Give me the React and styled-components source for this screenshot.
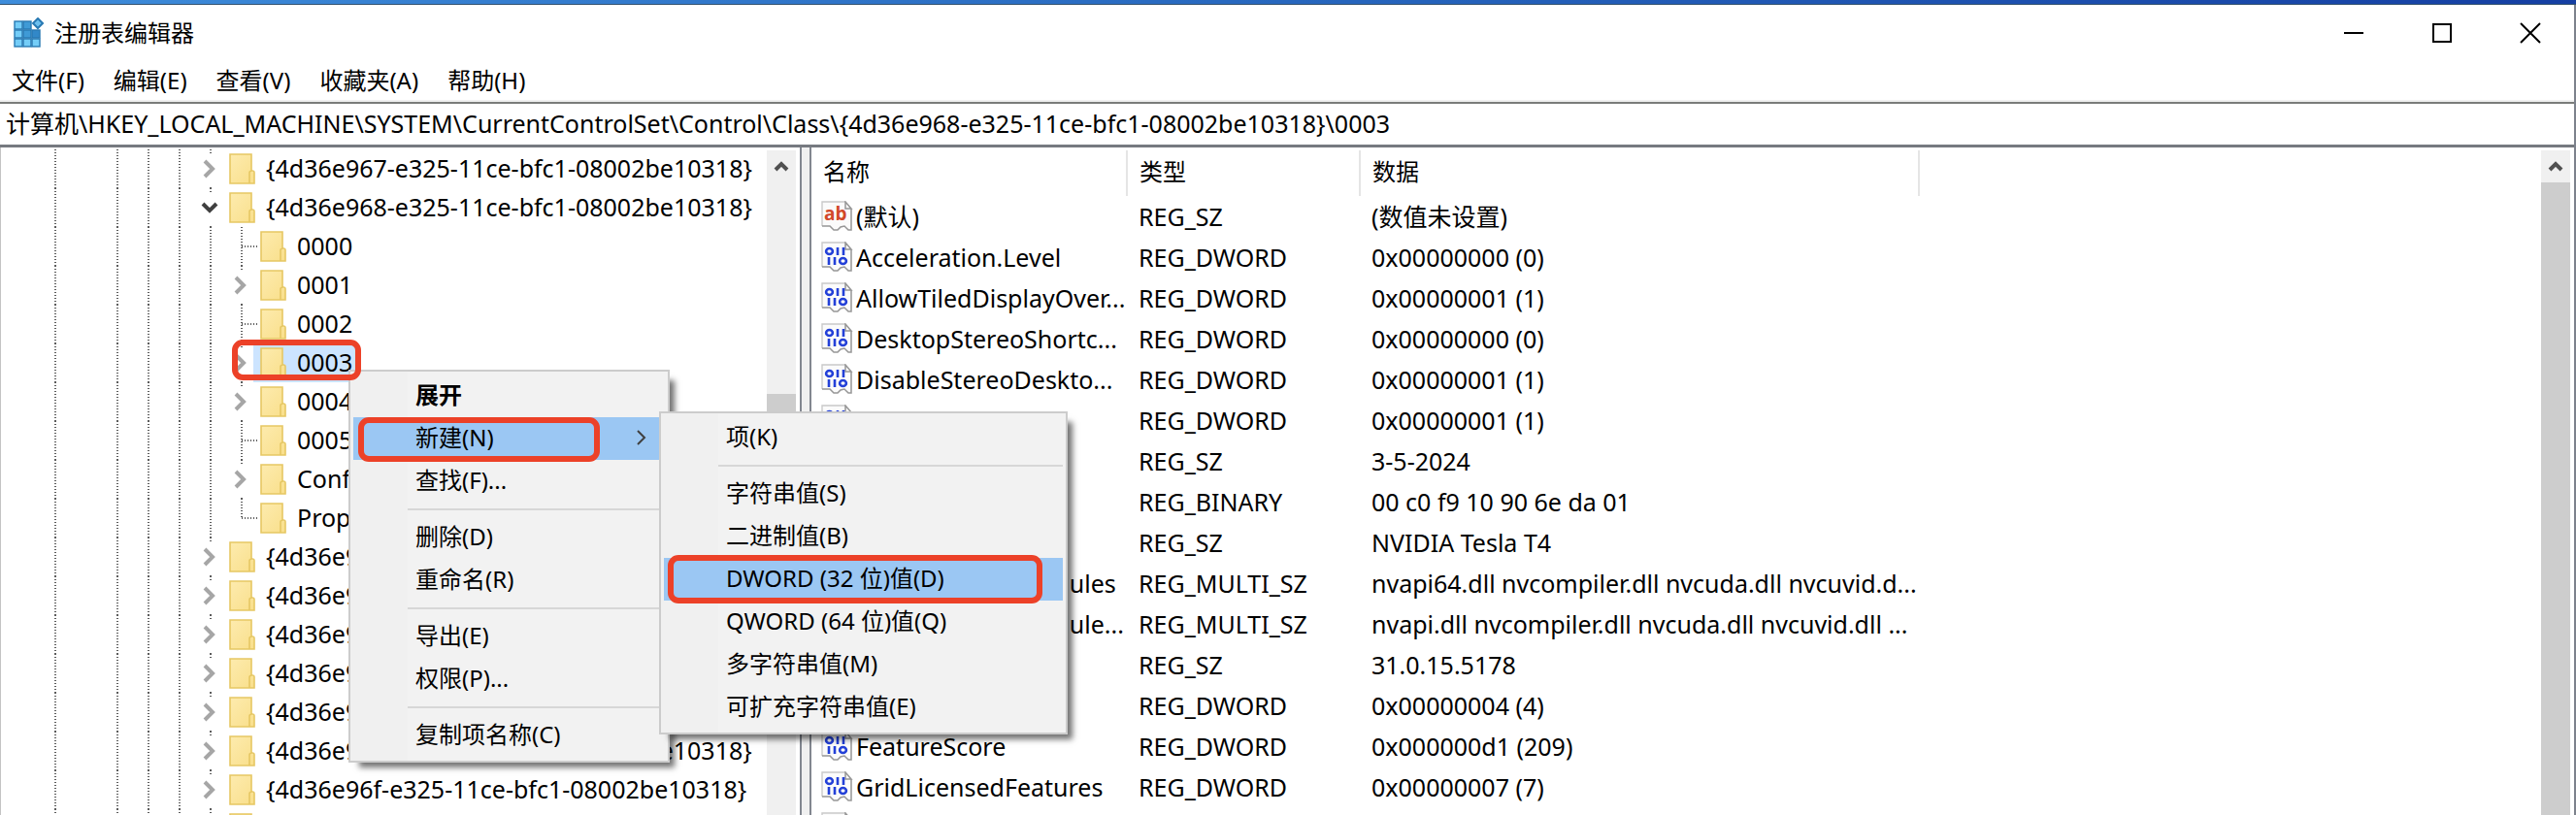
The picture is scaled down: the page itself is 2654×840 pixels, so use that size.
import styled, { createGlobalStyle, css } from "styled-components";

const GlobalStyle = createGlobalStyle`
	* {
		box-sizing: border-box;
	}

	body {
		margin: 0;
		background: #fff;
		color: #000;
		font-family: "Noto Sans", "Noto Sans CJK SC", sans-serif;
		font-size: 24px;
		line-height: 32px;
	}

	button,
	input {
		font: inherit;
		color: inherit;
		border: 0;
		padding: 0;
		background: none;
	}
`;

const dots = "#5c5c5c 0 1px, transparent 1px 3px";

const Screen = styled.div`
	height: 100vh;
	display: flex;
	flex-direction: column;
	overflow: hidden;
`;

const Desktop = styled.div`
	flex: none;
	height: 5px;
	background: linear-gradient(90deg, #3e8ddb, #2767be 50%, #153fa3);
	border-bottom: 1px solid #33526f;
`;

const Window = styled.div`
	flex: 1;
	min-height: 0;
	display: flex;
	flex-direction: column;
	background: #fff;
	border-right: 2px solid #7d828c;
`;

const TitleBar = styled.header`
	flex: none;
	height: 57px;
	display: flex;
	align-items: center;
	padding-left: 14px;
`;

const Title = styled.h1`
	flex: 1;
	margin: 0 0 0 10px;
	font-size: 24px;
	font-weight: 400;
`;

const CaptionButton = styled.button`
	width: 91px;
	height: 57px;
	display: flex;
	align-items: center;
	justify-content: center;
`;

const MenuBar = styled.nav`
	flex: none;
	height: 43px;
	display: flex;
	align-items: center;
	gap: 30px;
	padding-left: 12px;
	border-bottom: 2px solid #f0f0f0;
`;

const AddressBar = styled.label`
	flex: none;
	display: flex;
	height: 47px;
	border-top: 2px solid #7a7c7a;
	border-bottom: 3px solid #767a80;
`;

const AddressInput = styled.input`
	flex: 1;
	padding: 0 0 2px 6px;
	font-size: 25px;
	outline: none;
`;

const Body = styled.main`
	flex: 1;
	min-height: 0;
	display: flex;
	position: relative;
`;

const TreePane = styled.section`
	width: 826px;
	flex: none;
	display: flex;
	overflow: hidden;
	border-left: 1px solid #c4c4c4;
	border-right: 2px solid #828790;
`;

const Tree = styled.ul`
	flex: 1;
	margin: 0;
	padding: 2px 0 0 40px;
	list-style: none;
	font-size: 25px;
`;

const TreeRow = styled.li`
	height: 40px;
	display: flex;
	position: relative;
`;

const Guide = styled.span`
	width: 32px;
	height: ${(props) => (props.$last ? "21px" : "40px")};
	flex: none;
	display: flex;
	align-items: center;
	justify-content: center;
	${(props) =>
		!props.$blank &&
		css`
			background: repeating-linear-gradient(180deg, ${dots}) center / 2px 100% no-repeat;
		`}
`;

// the short line that joins a leaf to its guide
const Branch = styled.span`
	width: 16px;
	height: 2px;
	margin: ${(props) => (props.$last ? "19px" : "0")} 0 0 16px;
	background: repeating-linear-gradient(90deg, ${dots});
`;

const Expander = styled.button`
	width: 24px;
	height: 33px;
	display: flex;
	align-items: center;
	justify-content: center;
	background: #fff;
`;

const Node = styled.span`
	display: flex;
	align-items: center;
	gap: 11px;
	margin-left: -4px;
	padding: 0 4px 0 7px;
	white-space: nowrap;
	background: ${(props) => (props.$selected ? "#cce4ff" : "transparent")};
`;

const NodeLabel = styled.span`
	padding-bottom: 3px;
`;

const ScrollBar = styled.div`
	width: 30px;
	flex: none;
	margin: 3px 4px 0 0;
	display: flex;
	flex-direction: column;
	background: #f0f0f0;
`;

const ScrollButton = styled.button`
	height: 33px;
	flex: none;
	display: flex;
	align-items: center;
	justify-content: center;
`;

const ScrollThumb = styled.div`
	margin-top: ${(props) => props.$top}px;
	height: ${(props) => props.$size};
	background: #cdcdcd;
`;

const Splitter = styled.div`
	width: 8px;
	flex: none;
	background: #f0f0f0;
`;

const ListPane = styled.section`
	flex: 1;
	min-width: 0;
	display: flex;
	justify-content: space-between;
	overflow: hidden;
	border-left: 2px solid #828790;
`;

const ValueTable = styled.table`
	table-layout: fixed;
	width: 1141px;
	margin-top: 3px;
	border-collapse: collapse;
	align-self: flex-start;
`;

const HeadCell = styled.th`
	width: ${(props) => props.$width}px;
	height: 47px;
	padding: 0 0 4px 12px;
	border-right: 2px solid #e5e5e5;
	text-align: left;
	font-weight: 400;
`;

const Cell = styled.td`
	height: 42px;
	padding: 0 0 1px 12px;
	font-size: 25px;
	white-space: nowrap;
`;

const ValueName = styled.span`
	display: flex;
	align-items: center;
	gap: 3px;
	margin-left: -2px;
`;

const Menu = styled.div`
	position: absolute;
	left: ${(props) => props.$left}px;
	top: ${(props) => props.$top}px;
	width: ${(props) => props.$width}px;
	padding: 3px 3px 4px;
	border: 2px solid #cccccc;
	background: linear-gradient(90deg, #f0f0f0 59px, #f2f2f2 59px);
	box-shadow: 8px 8px 6px -3px rgba(0, 0, 0, 0.55);
`;

const MenuRow = styled.div`
	position: relative;
`;

const MenuItem = styled.button`
	width: 100%;
	height: 44px;
	display: flex;
	align-items: center;
	justify-content: space-between;
	padding: 0 12px 2px 64px;
	white-space: nowrap;
	font-weight: ${(props) => (props.$bold ? 700 : 400)};
	background: ${(props) => (props.$active ? "#9bc7f3" : "transparent")};
`;

const MenuSeparator = styled.hr`
	height: 2px;
	margin: 6px 0 6px 56px;
	border: 0;
	background: #d7d7d7;
`;

// red marker drawn over the step to click
const Marker = styled.span`
	position: absolute;
	z-index: 2;
	left: ${(props) => props.$left}px;
	top: ${(props) => props.$top}px;
	width: ${(props) => props.$width}px;
	height: ${(props) => props.$height}px;
	border: 6px solid #ec4128;
	border-radius: 11px;
	pointer-events: none;
`;

const keys = [
	{ name: "{4d36e967-e325-11ce-bfc1-08002be10318}", level: 0, state: "closed" },
	{ name: "{4d36e968-e325-11ce-bfc1-08002be10318}", level: 0, state: "open" },
	{ name: "0000", level: 1 },
	{ name: "0001", level: 1, state: "closed" },
	{ name: "0002", level: 1 },
	{ name: "0003", level: 1, state: "closed", selected: true },
	{ name: "0004", level: 1, state: "closed" },
	{ name: "0005", level: 1 },
	{ name: "Configuration", level: 1, state: "closed" },
	{ name: "Properties", level: 1, last: true },
	{ name: "{4d36e969-e325-11ce-bfc1-08002be10318}", level: 0, state: "closed" },
	{ name: "{4d36e96a-e325-11ce-bfc1-08002be10318}", level: 0, state: "closed" },
	{ name: "{4d36e96b-e325-11ce-bfc1-08002be10318}", level: 0, state: "closed" },
	{ name: "{4d36e96c-e325-11ce-bfc1-08002be10318}", level: 0, state: "closed" },
	{ name: "{4d36e96d-e325-11ce-bfc1-08002be10318}", level: 0, state: "closed" },
	{ name: "{4d36e96e-e325-11ce-bfc1-08002be10318}", level: 0, state: "closed" },
	{ name: "{4d36e96f-e325-11ce-bfc1-08002be10318}", level: 0, state: "closed" },
	{ name: "", level: 0, state: "closed" },
];

const values = [
	["(默认)", "REG_SZ", "(数值未设置)"],
	["Acceleration.Level", "REG_DWORD", "0x00000000 (0)"],
	["AllowTiledDisplayOver...", "REG_DWORD", "0x00000001 (1)"],
	["DesktopStereoShortc...", "REG_DWORD", "0x00000000 (0)"],
	["DisableStereoDeskto...", "REG_DWORD", "0x00000001 (1)"],
	["DisplayNoScroll", "REG_DWORD", "0x00000001 (1)"],
	["DriverDate", "REG_SZ", "3-5-2024"],
	["DriverDateData", "REG_BINARY", "00 c0 f9 10 90 6e da 01"],
	["DriverDesc", "REG_SZ", "NVIDIA Tesla T4"],
	["DriverSupportModules", "REG_MULTI_SZ", "nvapi64.dll nvcompiler.dll nvcuda.dll nvcuvid.d..."],
	["DriverSupportModule...", "REG_MULTI_SZ", "nvapi.dll nvcompiler.dll nvcuda.dll nvcuvid.dll ..."],
	["DriverVersion", "REG_SZ", "31.0.15.5178"],
	["EnableTiled", "REG_DWORD", "0x00000004 (4)"],
	["FeatureScore", "REG_DWORD", "0x000000d1 (209)"],
	["GridLicensedFeatures", "REG_DWORD", "0x00000007 (7)"],
	["", "", ""],
];

function AppIcon() {
	const cells = [
		["#74cdf8", 0, 0], ["#3f9ad6", 9, 0],
		["#74cdf8", 0, 9], ["#3f9ad6", 9, 9], ["#3288c8", 18, 9],
		["#74cdf8", 0, 18], ["#74cdf8", 9, 18], ["#74cdf8", 18, 18],
	];
	return (
		<svg width="32" height="32" viewBox="0 0 32 32">
			{cells.map(([fill, x, y]) => (
				<rect key={`${x}-${y}`} x={x + 1} y={y + 4} width="8" height="8" fill={fill} stroke="#2879b3" strokeWidth="1.4" />
			))}
			<path d="M25 1l5 5-5 5-5-5z" fill="#6ec0ee" stroke="#2879b3" strokeWidth="2" />
		</svg>
	);
}

function FolderIcon() {
	return (
		<svg width="27" height="32" viewBox="0 0 27 32">
			<defs>
				<linearGradient id="folder" x1="0" y1="0" x2="1" y2="1">
					<stop offset="0" stopColor="#fdebae" />
					<stop offset="1" stopColor="#f9df8b" />
				</linearGradient>
			</defs>
			<path d="M1 1h22v17l3 2v11H1z" fill="url(#folder)" />
			<path d="M23 18V1H1v30h25V20q0-2-2-2-3 0-3 2v11" fill="none" stroke="#e6c763" strokeWidth="1.6" />
		</svg>
	);
}

function ValueIcon({ text }) {
	return (
		<svg width="33" height="32" viewBox="0 0 33 32">
			<path d="M1 26V1h25l5 7v23l-4-2-4-3-4 3h-6l-5-3z" fill="#fbfbfb" />
			<path d="M1 26V1h24" fill="none" stroke="#c9c9c9" strokeWidth="1.4" />
			<path d="M25 1v7h6zM31 8v22h-3l-4-4-4 1-3 3h-4l-4-4H1" fill="none" stroke="#969696" strokeWidth="1.5" />
			{text ? (
				<text x="3" y="20" fill="#d2492a" fontSize="19" fontWeight="700" fontFamily="Open Sans, sans-serif">
					ab
				</text>
			) : (
				<g fill="none" stroke="#2340d8" strokeWidth="2.6">
					<ellipse cx="8.5" cy="10" rx="3.4" ry="3" />
					<path d="M17 6v8M23 6v8M8 16v8M14 16v8" />
					<ellipse cx="22.5" cy="20" rx="3.4" ry="3" />
				</g>
			)}
		</svg>
	);
}

function Chevron({ dir = "right", color = "#a6a6a6" }) {
	const paths = {
		right: "M5 3l8 8-8 8",
		down: "M3 7l7 7 7-7",
		up: "M5 14l6-6 6 6",
		small: "M6 4l7 7-7 7",
	};
	return (
		<svg width="22" height="22" viewBox="0 0 22 22">
			<path d={paths[dir]} fill="none" stroke={color} strokeWidth={dir === "small" ? 2 : 4} />
		</svg>
	);
}

function KeyRow({ item }) {
	return (
		<TreeRow>
			<Guide />
			<Guide $blank />
			<Guide />
			<Guide />
			<Guide />
			{item.level === 1 && <Guide />}
			<Guide $last={item.last}>
				{item.state ? (
					<Expander aria-label={item.state === "open" ? "折叠" : "展开"}>
						{item.state === "open" ? <Chevron dir="down" color="#404040" /> : <Chevron />}
					</Expander>
				) : (
					<Branch $last={item.last} />
				)}
			</Guide>
			<Node $selected={item.selected}>
				<FolderIcon />
				<NodeLabel>{item.name}</NodeLabel>
			</Node>
			{item.selected && <Marker $left={198} $top={-4} $width={133} $height={42} />}
		</TreeRow>
	);
}

function NewMenu() {
	return (
		<Menu $left={315} $top={-6} $width={421}>
			<MenuItem>项(K)</MenuItem>
			<MenuSeparator />
			<MenuItem>字符串值(S)</MenuItem>
			<MenuItem>二进制值(B)</MenuItem>
			<MenuRow>
				<MenuItem $active>DWORD (32 位)值(D)</MenuItem>
				<Marker $left={4} $top={-3} $width={386} $height={50} />
			</MenuRow>
			<MenuItem>QWORD (64 位)值(Q)</MenuItem>
			<MenuItem>多字符串值(M)</MenuItem>
			<MenuItem>可扩充字符串值(E)</MenuItem>
		</Menu>
	);
}

function ContextMenu() {
	return (
		<Menu $left={359} $top={229} $width={331}>
			<MenuItem $bold>展开</MenuItem>
			<MenuRow>
				<MenuItem $active>
					新建(N)
					<Chevron dir="small" color="#404040" />
				</MenuItem>
				<Marker $left={5} $top={0} $width={249} $height={46} />
				<NewMenu />
			</MenuRow>
			<MenuItem>查找(F)...</MenuItem>
			<MenuSeparator />
			<MenuItem>删除(D)</MenuItem>
			<MenuItem>重命名(R)</MenuItem>
			<MenuSeparator />
			<MenuItem>导出(E)</MenuItem>
			<MenuItem>权限(P)...</MenuItem>
			<MenuSeparator />
			<MenuItem>复制项名称(C)</MenuItem>
		</Menu>
	);
}

function Scroll({ top, size }) {
	return (
		<ScrollBar>
			<ScrollButton aria-label="向上滚动">
				<Chevron dir="up" color="#505050" />
			</ScrollButton>
			<ScrollThumb $top={top} $size={size} />
		</ScrollBar>
	);
}

function App() {
	return (
		<Screen>
			<GlobalStyle />
			<Desktop />
			<Window>
				<TitleBar>
					<AppIcon />
					<Title>注册表编辑器</Title>
					<CaptionButton aria-label="最小化">
						<svg width="22" height="22">
							<path d="M1 11h20" stroke="#000" strokeWidth="2" />
						</svg>
					</CaptionButton>
					<CaptionButton aria-label="最大化">
						<svg width="22" height="22">
							<rect x="2" y="2" width="18" height="18" fill="none" stroke="#000" strokeWidth="2" />
						</svg>
					</CaptionButton>
					<CaptionButton aria-label="关闭">
						<svg width="22" height="22">
							<path d="M1 1l20 20M21 1L1 21" stroke="#000" strokeWidth="2" />
						</svg>
					</CaptionButton>
				</TitleBar>
				<MenuBar>
					<button>文件(F)</button>
					<button>编辑(E)</button>
					<button>查看(V)</button>
					<button>收藏夹(A)</button>
					<button>帮助(H)</button>
				</MenuBar>
				<AddressBar>
					<AddressInput
						aria-label="地址"
						readOnly
						value="计算机\HKEY_LOCAL_MACHINE\SYSTEM\CurrentControlSet\Control\Class\{4d36e968-e325-11ce-bfc1-08002be10318}\0003"
					/>
				</AddressBar>
				<Body>
					<TreePane>
						<Tree>
							{keys.map((item) => (
								<KeyRow key={item.name} item={item} />
							))}
						</Tree>
						<Scroll top={218} size="120px" />
					</TreePane>
					<Splitter />
					<ListPane>
						<ValueTable>
							<thead>
								<tr>
									<HeadCell $width={325}>名称</HeadCell>
									<HeadCell $width={240}>类型</HeadCell>
									<HeadCell $width={576}>数据</HeadCell>
								</tr>
							</thead>
							<tbody>
								{values.map(([name, type, data]) => (
									<tr key={name}>
										<Cell>
											<ValueName>
												<ValueIcon text={type.endsWith("SZ")} />
												{name}
											</ValueName>
										</Cell>
										<Cell>{type}</Cell>
										<Cell>{data}</Cell>
									</tr>
								))}
							</tbody>
						</ValueTable>
						<Scroll top={0} size="100%" />
					</ListPane>
					<ContextMenu />
				</Body>
			</Window>
		</Screen>
	);
}

export default App;
